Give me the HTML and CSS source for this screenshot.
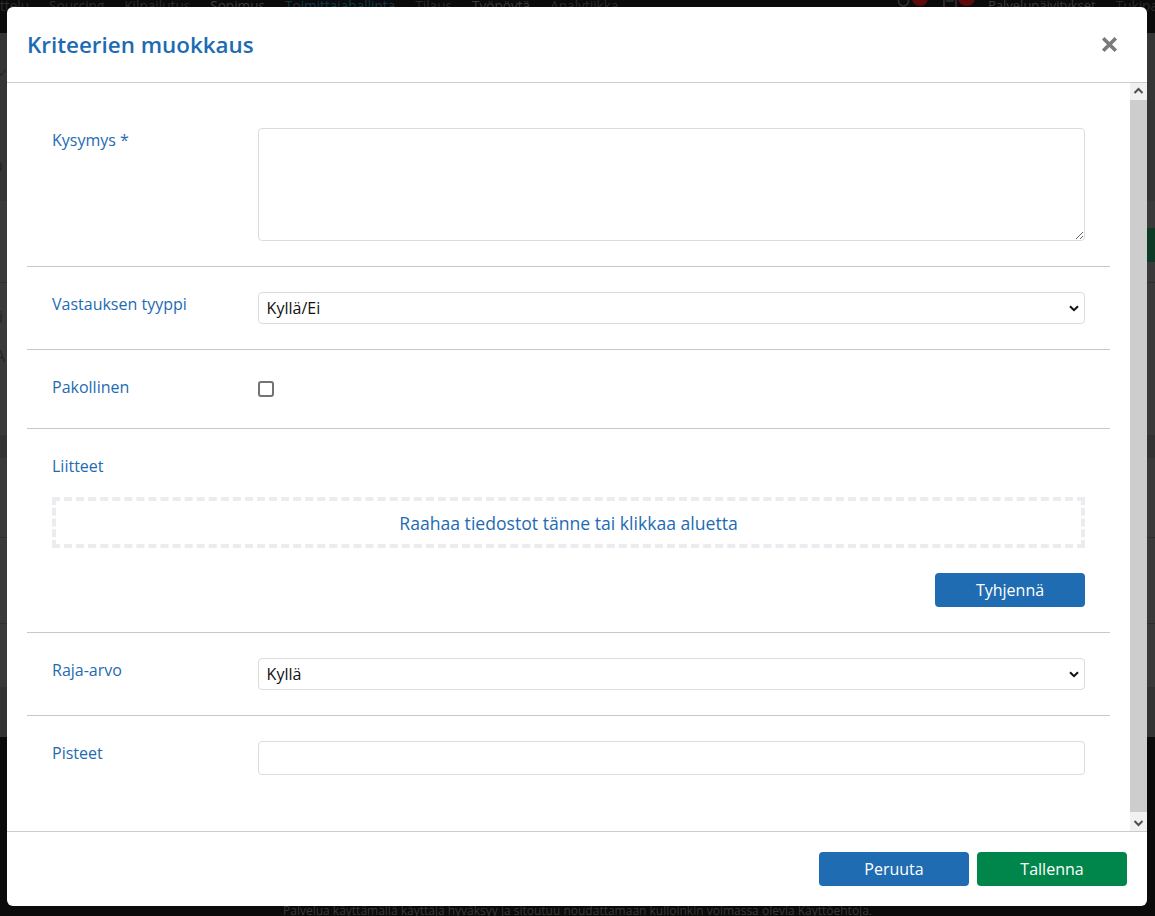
FILE: index.html
```html
<!DOCTYPE html>
<html lang="fi">
<head>
<meta charset="utf-8">
<title>Kriteerien muokkaus</title>
<link rel="stylesheet" href="styles.css">
</head>
<body>
<div class="page">
  <nav class="topnav">
    <div class="nav-left">
      <span class="nl">ttelu</span>
      <span class="nl">Sourcing</span>
      <span class="nl">Kilpailutus</span>
      <span class="nl nl-hi">Sopimus</span>
      <span class="nl nl-act">Toimittajahallinta</span>
      <span class="nl">Tilaus</span>
      <span class="nl nl-hi">Työpöytä</span>
      <span class="nl">Analytiikka</span>
    </div>
    <div class="nav-right">
      <svg class="nav-icon nav-icon-a" width="13" height="14" viewBox="0 0 13 14"><circle cx="6.5" cy="4" r="5" fill="none" stroke="#333" stroke-width="1.6"/></svg>
      <span class="badge badge-a"></span>
      <svg class="nav-icon nav-icon-b" width="14" height="14" viewBox="0 0 14 14"><rect x="1" y="0" width="12" height="12" fill="none" stroke="#333" stroke-width="1.6"/><line x1="3" y1="4" x2="11" y2="4" stroke="#333" stroke-width="1.4"/></svg>
      <span class="badge badge-b"></span>
      <span class="nl nl-hi nav-upd">Palvelupäivitykset</span>
      <span class="nl nav-tuki">Tukipalvelut</span>
    </div>
  </nav>
  <main class="page-main">
    <div class="band band-a"><span class="edge-char edge-check">✓</span><span class="edge-char edge-a">a</span></div>
    <div class="band band-b"><span class="page-btn"></span></div>
    <div class="band band-c"><span class="edge-char edge-i">i</span><span class="edge-char edge-A">A</span></div>
    <div class="band band-d"></div>
    <div class="band band-e"></div>
    <div class="band band-f"></div>
    <div class="band band-g"></div>
    <div class="band band-h"></div>
  </main>
  <footer class="page-footer">
    <p class="terms">Palvelua käyttämällä käyttäjä hyväksyy ja sitoutuu noudattamaan kulloinkin voimassa olevia Käyttöehtoja.</p>
  </footer>
</div>

<div class="modal">
  <div class="modal-header">
    <h2 class="modal-title">Kriteerien muokkaus</h2>
    <button class="close-btn" type="button" aria-label="Sulje">
      <svg width="17" height="17" viewBox="0 0 17 17"><path d="M2.2 2.2 L14.8 14.8 M14.8 2.2 L2.2 14.8" stroke="#7a7a7a" stroke-width="3.6" stroke-linecap="butt"/></svg>
    </button>
  </div>

  <div class="modal-body">
    <div class="body-scroll">
      <div class="form-row">
        <label class="lbl">Kysymys *</label>
        <div class="field"><textarea class="txtarea"></textarea></div>
      </div>

      <div class="form-row">
        <label class="lbl">Vastauksen tyyppi</label>
        <div class="field select-wrap">
          <select class="sel"><option>Kyllä/Ei</option></select>
          <svg class="chev" width="10" height="7" viewBox="0 0 10 7"><path d="M1 1.2 L5 5.2 L9 1.2" fill="none" stroke="#111" stroke-width="2"/></svg>
        </div>
      </div>

      <div class="form-row">
        <label class="lbl">Pakollinen</label>
        <div class="field field-check"><input type="checkbox" class="chk"></div>
      </div>

      <div class="form-row form-row-stack">
        <label class="lbl lbl-full">Liitteet</label>
        <div class="dropzone">Raahaa tiedostot tänne tai klikkaa aluetta</div>
        <div class="dz-actions"><button class="btn btn-blue" type="button">Tyhjennä</button></div>
      </div>

      <div class="form-row">
        <label class="lbl">Raja-arvo</label>
        <div class="field select-wrap">
          <select class="sel"><option>Kyllä</option></select>
          <svg class="chev" width="10" height="7" viewBox="0 0 10 7"><path d="M1 1.2 L5 5.2 L9 1.2" fill="none" stroke="#111" stroke-width="2"/></svg>
        </div>
      </div>

      <div class="form-row">
        <label class="lbl">Pisteet</label>
        <div class="field"><input type="text" class="txt"></div>
      </div>
    </div>

    <div class="scrollbar">
      <div class="sb-btn">
        <svg width="17" height="17" viewBox="0 0 17 17"><path d="M4.5 10 L8.5 6 L12.5 10" fill="none" stroke="#505050" stroke-width="2"/></svg>
      </div>
      <div class="sb-track"><div class="sb-thumb"></div></div>
      <div class="sb-btn">
        <svg width="17" height="17" viewBox="0 0 17 17"><path d="M4.5 7 L8.5 11 L12.5 7" fill="none" stroke="#505050" stroke-width="2"/></svg>
      </div>
    </div>
  </div>

  <div class="modal-footer">
    <button class="btn btn-blue" type="button">Peruuta</button>
    <button class="btn btn-green" type="button">Tallenna</button>
  </div>
</div>
</body>
</html>
```

FILE: styles.css
```css
* { box-sizing: border-box; }

html, body {
  margin: 0;
  padding: 0;
}

body {
  width: 1155px;
  height: 916px;
  overflow: hidden;
  position: relative;
  background: #0b0b0b;
  font-family: "Open Sans", "Noto Sans", sans-serif;
}

/* ---------- dimmed page behind the dialog ---------- */
.page {
  display: flex;
  flex-direction: column;
  height: 916px;
}

.topnav {
  height: 33px;
  flex: none;
  background: #0b0b0b;
  display: flex;
  font-size: 13.6px;
  line-height: 11px;
  white-space: nowrap;
  overflow: hidden;
}

.nav-left {
  flex: 0 0 897px;
  display: flex;
  gap: 20px;
}

.nav-right {
  display: flex;
  align-items: flex-start;
}

.nl { color: #2c2c2c; }
.nl-hi { color: #3c3c3c; }
.nl-act { color: #0f3a4c; }

.nav-icon { display: block; margin-top: -3px; }
.nav-icon-b { margin-left: 15px; }

.badge {
  width: 16px;
  height: 16px;
  border-radius: 50%;
  background: #5e0a0a;
  margin-top: -10px;
  margin-left: 2px;
}
.badge-b { margin-left: 1px; width: 17px; }

.nav-upd { margin-left: 13px; font-size: 13px; }
.nav-tuki { margin-left: 20px; }

.page-main {
  height: 704px;
  flex: none;
  display: flex;
  flex-direction: column;
  background: #3a3a3a;
}

.band { position: relative; overflow: hidden; }
.band-a { height: 168px; background: #353535; }
.band-b { height: 82px; border-bottom: 1px solid #2e2e2e; display: flex; justify-content: flex-end; }
.band-c { height: 152px; }
.band-d { height: 23px; background: #333; }
.band-e { height: 80px; border-bottom: 1px solid #2e2e2e; }
.band-f { height: 86px; border-bottom: 1px solid #2e2e2e; }
.band-g { height: 63px; }
.band-h { height: 50px; background: #333; }

.page-btn {
  width: 20px;
  height: 34px;
  margin-top: 27px;
  margin-right: -10px;
  background: #0d3b25;
}

.edge-char {
  position: absolute;
  left: -4px;
  font-size: 16px;
  color: #242424;
  line-height: 16px;
}
.edge-check { top: 32px; left: -2px; font-size: 12px; }
.edge-a { top: 124px; left: -6px; }
.edge-i { top: 26px; left: -1px; }
.edge-A { top: 65px; left: -5px; }

.page-footer {
  flex: 1;
  background: #0b0b0b;
  padding-top: 166px;
}

.terms {
  margin: 0;
  text-align: center;
  font-size: 12px;
  line-height: 16px;
  color: #373737;
}

/* ---------- dialog ---------- */
.modal {
  position: absolute;
  left: 7px;
  top: 7px;
  width: 1140px;
  height: 899px;
  background: #fff;
  border-radius: 6px;
  display: flex;
  flex-direction: column;
  overflow: hidden;
}

.modal-header {
  flex: none;
  height: 76px;
  border-bottom: 1px solid #cccccc;
  display: flex;
  align-items: center;
  justify-content: space-between;
  padding: 0 29px 0 20px;
}

.modal-title {
  margin: 0;
  font-size: 22.4px;
  font-weight: 600;
  color: #1d6bb3;
  line-height: 30px;
}

.close-btn {
  border: 0;
  padding: 0;
  margin: 0;
  background: none;
  width: 17px;
  height: 17px;
  display: flex;
}

.modal-body {
  flex: 1;
  min-height: 0;
  display: flex;
}

.body-scroll {
  flex: 1;
  min-width: 0;
  overflow: hidden;
  padding: 20px 20px 0 20px;
}

.form-row {
  display: flex;
  padding: 25px;
  border-bottom: 1px solid #c8c8c8;
}
.form-row:last-child { border-bottom: 0; }

.form-row-stack {
  flex-direction: column;
}

.lbl {
  flex: 0 0 20%;
  font-size: 16px;
  line-height: 24px;
  color: #1d6bb3;
}

.lbl-full {
  flex: none;
  margin-bottom: 19px;
}

.field {
  flex: 1;
  min-width: 0;
  margin-left: -1px;
}

.txtarea {
  display: block;
  width: 100%;
  height: 113px;
  border: 1px solid #dcdcdc;
  border-radius: 4px;
  font-family: inherit;
  font-size: 16px;
  padding: 6px 8px;
  margin: 0;
}

.select-wrap { position: relative; }

.sel {
  display: block;
  width: 100%;
  height: 32px;
  margin: 0;
  -webkit-appearance: none;
  appearance: none;
  border: 1px solid #dcdcdc;
  border-radius: 4px;
  background: #fff;
  font-family: inherit;
  font-size: 16px;
  color: #111;
  padding: 0 8px;
}

.chev {
  position: absolute;
  right: 6px;
  top: 13px;
  pointer-events: none;
}

.field-check {
  height: 28px;
  display: flex;
  align-items: flex-start;
}

.chk {
  -webkit-appearance: none;
  appearance: none;
  width: 16px;
  height: 16px;
  margin: 6px 0 0 0;
  border: 2px solid #737373;
  border-radius: 3px;
  background: #fff;
}

.txt {
  display: block;
  width: 100%;
  height: 34px;
  margin: 0;
  border: 1px solid #dcdcdc;
  border-radius: 4px;
  font-family: inherit;
  font-size: 16px;
  padding: 0 8px;
}

.dropzone {
  height: 51px;
  border: 4px dashed #ebebf0;
  display: flex;
  align-items: center;
  justify-content: center;
  font-size: 17.6px;
  color: #1d6bb3;
}

.dz-actions {
  display: flex;
  justify-content: flex-end;
  margin-top: 25px;
}

.btn {
  width: 150px;
  height: 34px;
  border: 0;
  border-radius: 4px;
  font-family: inherit;
  font-size: 16px;
  color: #fff;
  padding: 0;
  margin: 0;
}
.btn-blue { background: #1f6cb2; }
.btn-green { background: #00864b; }

/* fake classic scrollbar */
.scrollbar {
  flex: 0 0 17px;
  display: flex;
  flex-direction: column;
  background: #f1f1f1;
}

.sb-btn {
  flex: 0 0 17px;
  height: 17px;
  display: flex;
}

.sb-track {
  flex: 1;
  padding-bottom: 2px;
  display: flex;
}

.sb-thumb {
  flex: 1;
  background: #cdcdcd;
}

.modal-footer {
  flex: none;
  height: 75px;
  border-top: 1px solid #cccccc;
  display: flex;
  justify-content: flex-end;
  gap: 8px;
  padding: 20px;
}
```
